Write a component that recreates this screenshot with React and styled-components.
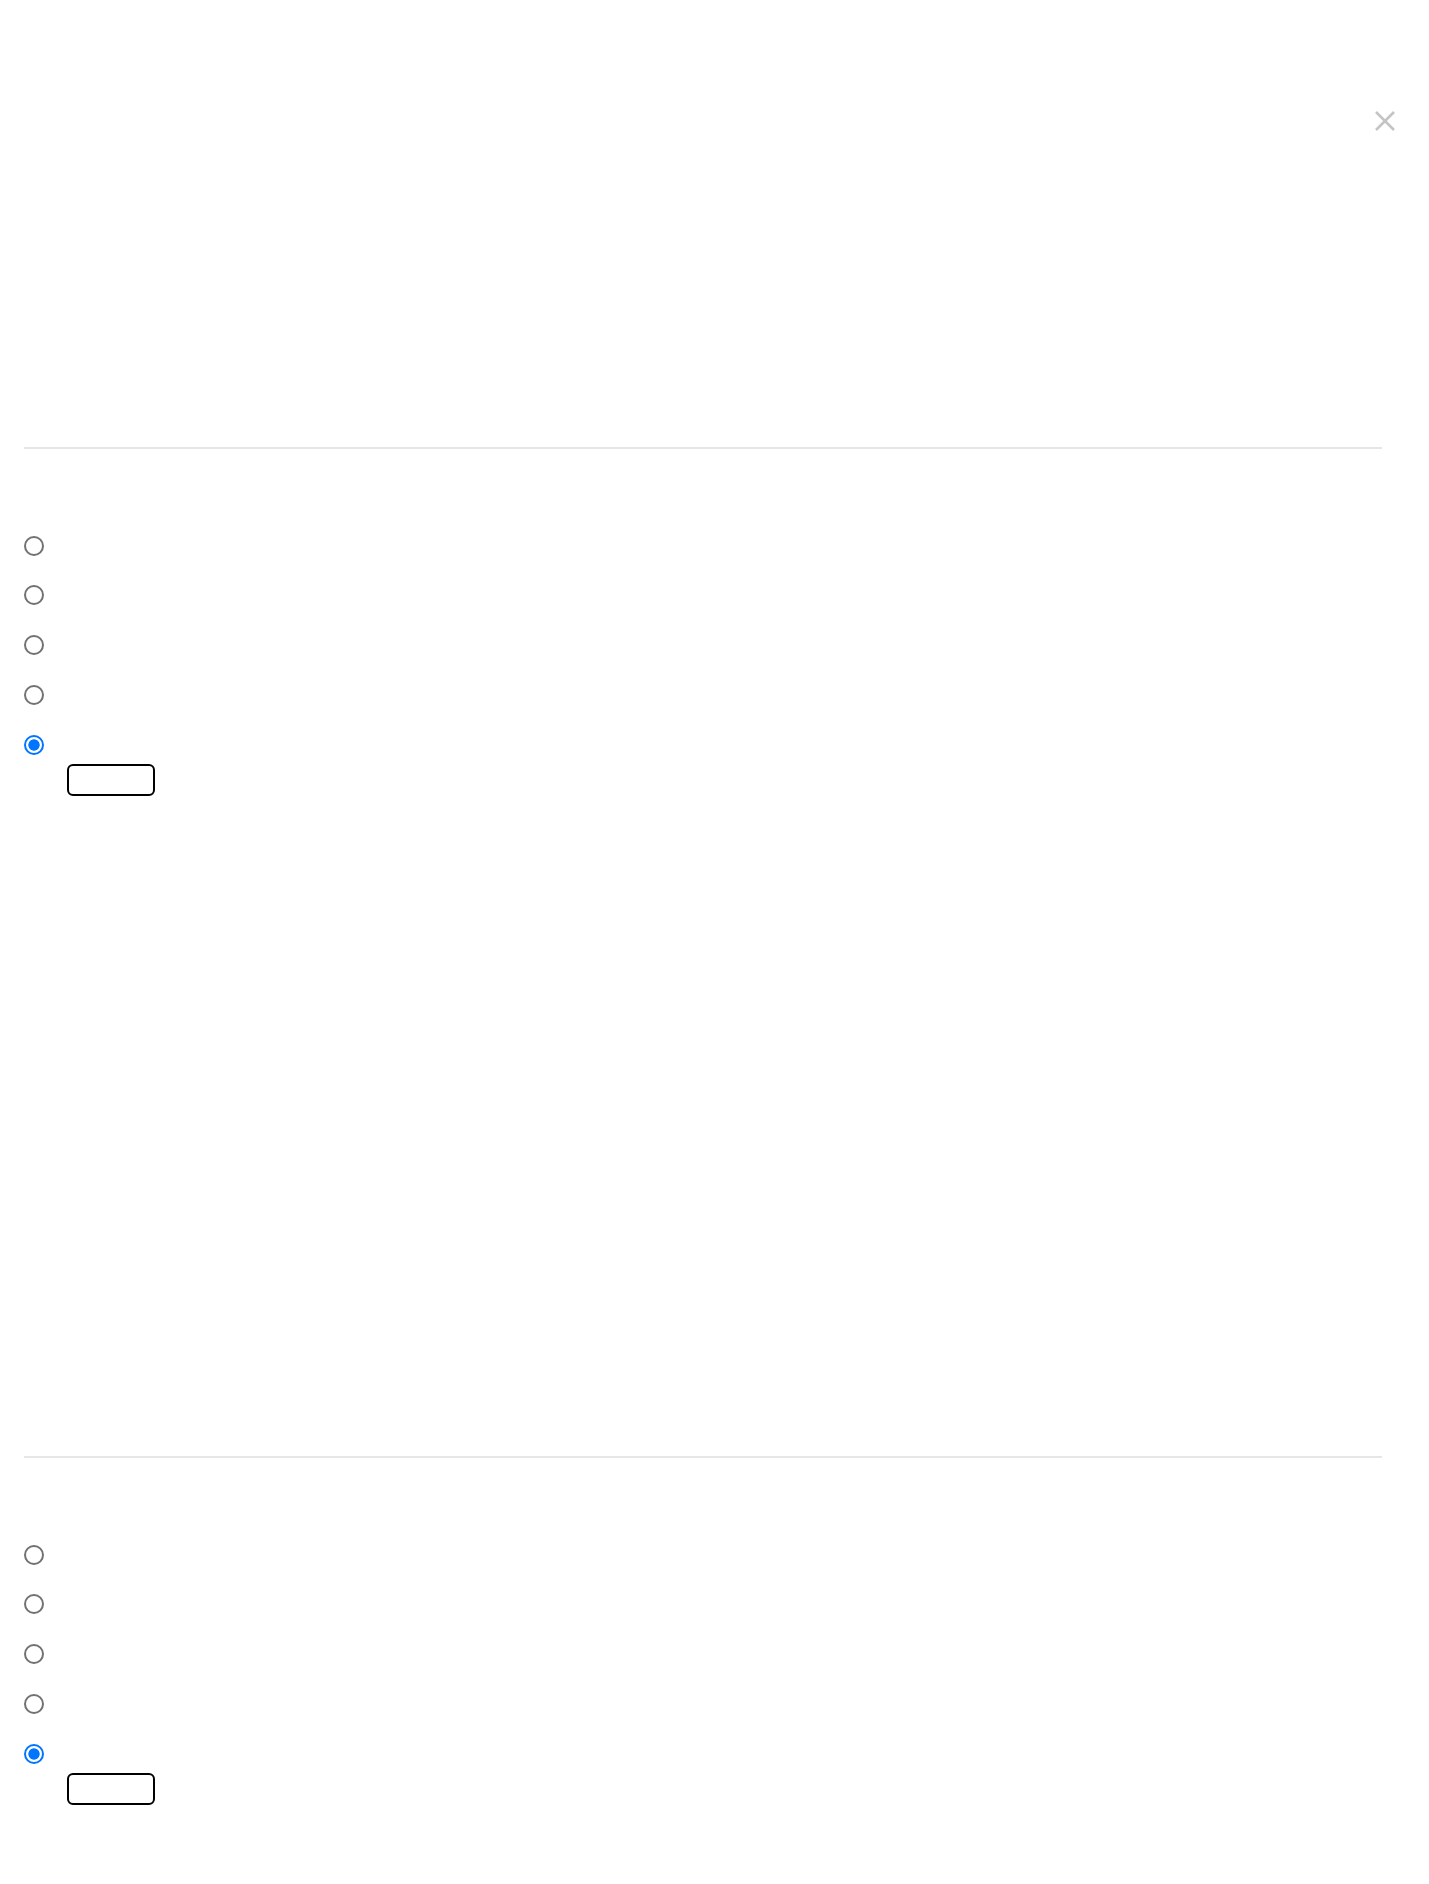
import React from 'react';
import styled, { createGlobalStyle } from 'styled-components';

const GlobalStyle = createGlobalStyle`
  html, body {
    margin: 0;
    padding: 0;
    background: #ffffff;
  }
  body {
    font-family: 'Liberation Sans', Arial, sans-serif;
    color: #212529;
  }
  * {
    box-sizing: border-box;
  }
`;

const Page = styled.div`
  padding: 0 33px 0 24px;
  height: 1884px;
  overflow: hidden;
`;

const TopBar = styled.div`
  height: 447px;
  display: flex;
  justify-content: flex-end;
  align-items: flex-start;
  padding-top: 110px;
`;

const CloseButton = styled.button`
  width: 22px;
  height: 22px;
  padding: 0;
  border: none;
  background: transparent;
  cursor: pointer;
  display: flex;
  align-items: center;
  justify-content: center;
`;

const Section = styled.section`
  margin-right: 14px;
  border-top: 2px solid #e6e6e6;
  padding-top: 86.5px;
  height: ${props => (props.last ? 'auto' : '1009px')};
`;

const OptionList = styled.div`
  display: flex;
  flex-direction: column;
  gap: 29.75px;
`;

const Option = styled.label`
  display: flex;
  align-items: center;
  gap: 12px;
  height: 20px;
`;

const Radio = styled.input.attrs({ type: 'radio' })`
  appearance: none;
  -webkit-appearance: none;
  width: 20px;
  height: 20px;
  margin: 0;
  border-radius: 50%;
  border: 2px solid #727272;
  background: #ffffff;
  cursor: pointer;

  &:checked {
    border-color: #0075ff;
    background: radial-gradient(circle, #0075ff 0 5.3px, #ffffff 6px);
  }
`;

const OtherInput = styled.input`
  display: block;
  margin: 9px 0 0 43px;
  width: 88px;
  height: 32px;
  border: 2px solid #000000;
  border-radius: 6px;
  background: #ffffff;
  font-family: inherit;
  font-size: 14px;
  padding: 0 6px;
  outline: none;
`;

function CloseIcon() {
  return (
    <svg width="22" height="22" viewBox="0 0 22 22" fill="none">
      <path d="M2 2L20 20M20 2L2 20" stroke="#c4c4c4" strokeWidth="2.5" />
    </svg>
  );
}

function Question({ name, last }) {
  return (
    <Section last={last}>
      <OptionList>
        {[0, 1, 2, 3, 4].map(i => (
          <Option key={i}>
            <Radio name={name} defaultChecked={i === 4} />
          </Option>
        ))}
      </OptionList>
      <OtherInput type="text" />
    </Section>
  );
}

function App() {
  return (
    <>
      <GlobalStyle />
      <Page>
        <TopBar>
          <CloseButton aria-label="Close">
            <CloseIcon />
          </CloseButton>
        </TopBar>
        <Question name="q1" />
        <Question name="q2" last />
      </Page>
    </>
  );
}

export default App;
